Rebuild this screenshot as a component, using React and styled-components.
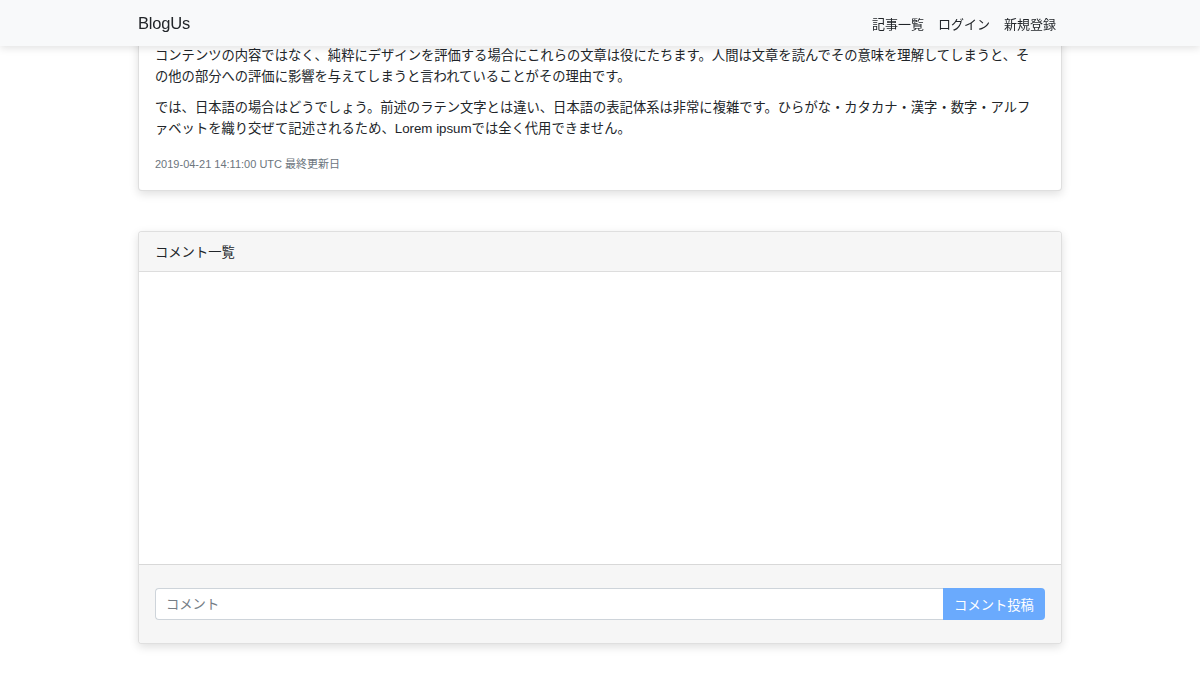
import React from 'react'
import styled, { createGlobalStyle } from 'styled-components'

const Global = createGlobalStyle`
  * { box-sizing: border-box; }
  body {
    margin: 0;
    background: #fff;
    color: #212529;
    font-family: "Liberation Sans", "Noto Sans CJK JP", sans-serif;
    font-size: 13.3px;
  }
`

function App() {
  return (
    <>
      <Global />
      <Navbar>
        <NavInner>
          <Brand href="/">BlogUs</Brand>
          <NavLinks>
            <NavItem href="/articles">記事一覧</NavItem>
            <NavItem href="/login">ログイン</NavItem>
            <NavItem href="/signup">新規登録</NavItem>
          </NavLinks>
        </NavInner>
      </Navbar>

      <Main>
        <ArticleCard>
          <Text>
            コンテンツの内容ではなく、純粋にデザインを評価する場合にこれらの文章は役にたちます。人間は文章を読んでその意味を理解してしまうと、その他の部分への評価に影響を与えてしまうと言われていることがその理由です。
          </Text>
          <Text last>
            では、日本語の場合はどうでしょう。前述のラテン文字とは違い、日本語の表記体系は非常に複雑です。ひらがな・カタカナ・漢字・数字・アルファベットを織り交ぜて記述されるため、Lorem ipsumでは全く代用できません。
          </Text>
          <Meta>2019-04-21 14:11:00 UTC 最終更新日</Meta>
        </ArticleCard>

        <CommentCard>
          <CardHeader>コメント一覧</CardHeader>
          <CardBody />
          <CardFooter>
            <InputGroup>
              <CommentInput placeholder="コメント" />
              <SubmitButton disabled>コメント投稿</SubmitButton>
            </InputGroup>
          </CardFooter>
        </CommentCard>
      </Main>
    </>
  )
}

const Navbar = styled.nav`
  position: fixed;
  top: 0;
  left: 0;
  right: 0;
  height: 46px;
  background: #f8f9fa;
  box-shadow: 0 2px 8px rgba(0, 0, 0, 0.12);
  z-index: 10;
`

const NavInner = styled.div`
  width: 924px;
  height: 100%;
  margin: 0 auto;
  display: flex;
  align-items: center;
  justify-content: space-between;
`

const Brand = styled.a`
  font-size: 16.5px;
  color: #212529;
  text-decoration: none;
  letter-spacing: -0.2px;
`

const NavLinks = styled.div`
  display: flex;
  gap: 14px;
  padding-right: 6px;
`

const NavItem = styled.a`
  font-size: 13px;
  color: #212529;
  text-decoration: none;
`

const Main = styled.main`
  width: 924px;
  margin: 0 auto;
  padding-bottom: 40px;
`

const Card = styled.section`
  background: #fff;
  border: 1px solid rgba(0, 0, 0, 0.125);
  border-radius: 4px;
  box-shadow: 0 3px 10px rgba(0, 0, 0, 0.13);
`

const ArticleCard = styled(Card)`
  padding: 45px 24px 17px 16px;
  border-top: none;
  border-radius: 0 0 4px 4px;
`

const Text = styled.p`
  margin: 0 0 ${p => (p.last ? '17px' : '10px')};
  font-size: 13.3px;
  line-height: 21px;
`

const Meta = styled.div`
  font-size: 11px;
  line-height: 17px;
  color: #6c757d;
`

const CommentCard = styled(Card)`
  margin-top: 40px;
  overflow: hidden;
`

const CardHeader = styled.div`
  height: 40px;
  display: flex;
  align-items: center;
  padding: 0 16px;
  background: #f6f6f6;
  border-bottom: 1px solid rgba(0, 0, 0, 0.1);
  font-size: 13.3px;
`

const CardBody = styled.div`
  height: 292px;
  background: #fff;
`

const CardFooter = styled.div`
  padding: 23px 16px 23px;
  background: #f6f6f6;
  border-top: 1px solid rgba(0, 0, 0, 0.12);
`

const InputGroup = styled.div`
  display: flex;
  height: 32px;
`

const CommentInput = styled.input`
  flex: 1;
  height: 100%;
  border: 1px solid #ced4da;
  border-right: none;
  border-radius: 4px 0 0 4px;
  padding: 0 10px;
  font-family: inherit;
  font-size: 13.3px;
  color: #495057;
  background: #fff;
  outline: none;

  &::placeholder {
    color: #757d85;
  }
`

const SubmitButton = styled.button`
  width: 102px;
  height: 100%;
  border: none;
  border-radius: 0 4px 4px 0;
  background: #6aaafd;
  color: #fff;
  font-family: inherit;
  font-size: 13.3px;
  padding: 0;
`

export default App
